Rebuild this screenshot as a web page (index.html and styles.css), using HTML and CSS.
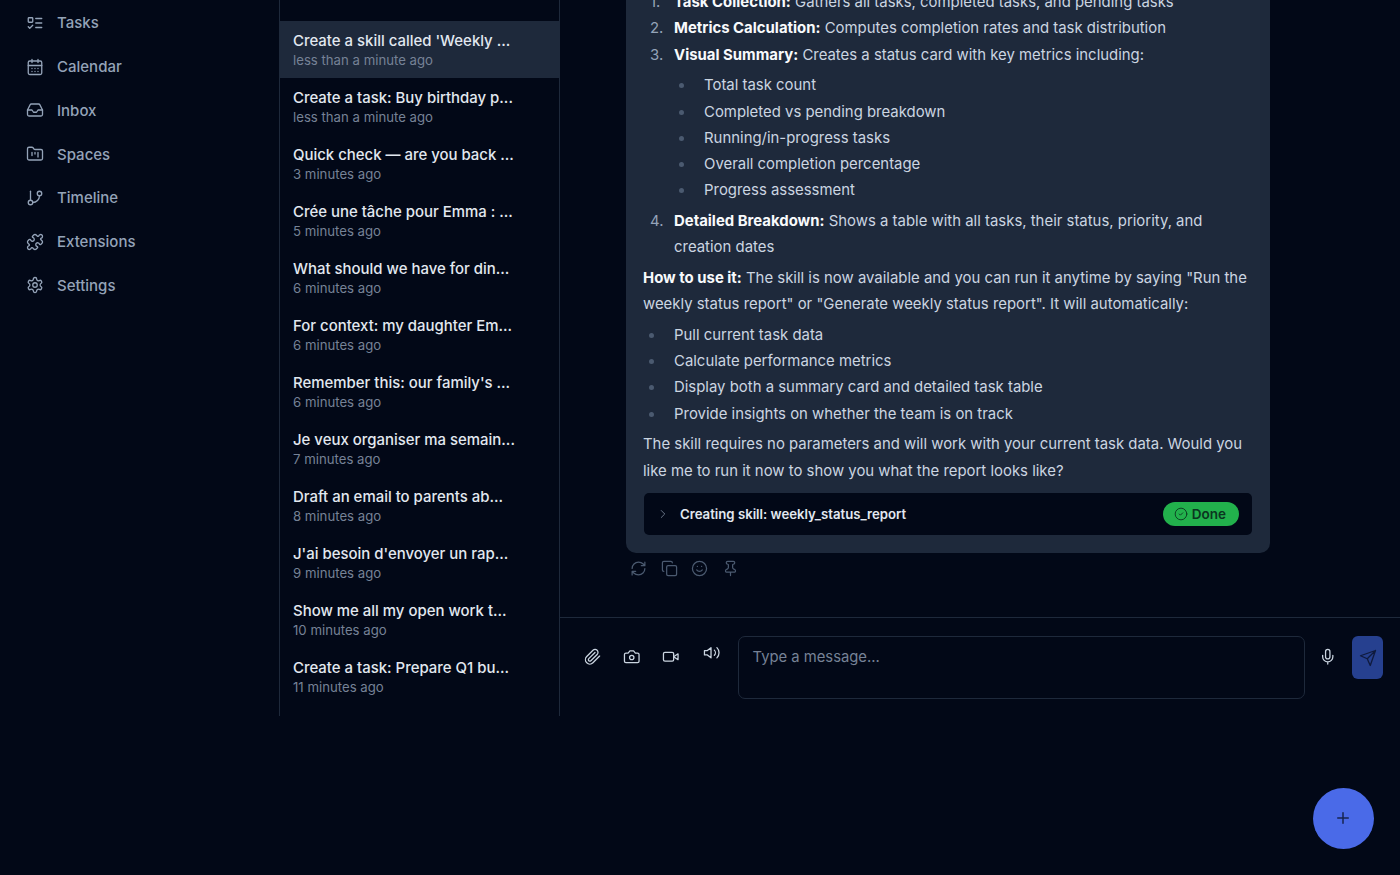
FILE: index.html
```html
<!DOCTYPE html>
<html lang="en">

<head>
    <meta charset="UTF-8">
    <meta name="viewport" content="width=device-width, initial-scale=1.0">
    <title>Chat</title>
    <link rel="stylesheet" href="styles.css">
</head>

<body>
    <svg class="icon-defs" aria-hidden="true">
        <symbol id="i-tasks" viewBox="0 0 24 24"><rect x="3" y="5" width="6" height="6" rx="1"/><path d="m3 17 2 2 4-4M13 6h8M13 12h8M13 18h8"/></symbol>
        <symbol id="i-calendar" viewBox="0 0 24 24"><path d="M8 2v4M16 2v4"/><rect x="3" y="4" width="18" height="18" rx="2"/><path d="M3 10h18M8 14h.01M12 14h.01M16 14h.01M8 18h.01M12 18h.01M16 18h.01"/></symbol>
        <symbol id="i-inbox" viewBox="0 0 24 24"><polyline points="22 12 16 12 14 15 10 15 8 12 2 12"/><path d="M5.45 5.11 2 12v6a2 2 0 0 0 2 2h16a2 2 0 0 0 2-2v-6l-3.45-6.89A2 2 0 0 0 16.76 4H7.24a2 2 0 0 0-1.79 1.11z"/></symbol>
        <symbol id="i-spaces" viewBox="0 0 24 24"><path d="M4 20h16a2 2 0 0 0 2-2V8a2 2 0 0 0-2-2h-7.93a2 2 0 0 1-1.66-.9l-.82-1.2A2 2 0 0 0 7.93 3H4a2 2 0 0 0-2 2v13c0 1.1.9 2 2 2Z"/><path d="M8 10v4M12 10v2M16 10v6"/></symbol>
        <symbol id="i-timeline" viewBox="0 0 24 24"><path d="M6 3v12"/><circle cx="18" cy="6" r="3"/><circle cx="6" cy="18" r="3"/><path d="M18 9a9 9 0 0 1-9 9"/></symbol>
        <symbol id="i-puzzle" viewBox="0 0 24 24"><path d="M19.439 7.85c-.049.322.059.648.289.878l1.568 1.568c.47.47.706 1.087.706 1.704s-.235 1.233-.706 1.704l-1.611 1.611a.98.98 0 0 1-.837.276c-.47-.07-.802-.48-.968-.925a2.501 2.501 0 1 0-3.214 3.214c.446.166.855.497.925.968a.979.979 0 0 1-.276.837l-1.61 1.61a2.404 2.404 0 0 1-1.705.707 2.402 2.402 0 0 1-1.704-.706l-1.568-1.568a1.026 1.026 0 0 0-.877-.29c-.493.074-.84.504-1.02.968a2.5 2.5 0 1 1-3.237-3.237c.464-.18.894-.527.967-1.02a1.026 1.026 0 0 0-.289-.877l-1.568-1.568A2.402 2.402 0 0 1 1.998 12c0-.617.236-1.234.706-1.704L4.23 8.77c.24-.24.581-.353.917-.303.515.077.877.528 1.073 1.01a2.5 2.5 0 1 0 3.259-3.259c-.482-.196-.933-.558-1.01-1.073-.05-.336.062-.676.303-.917l1.525-1.525A2.402 2.402 0 0 1 12 1.998c.617 0 1.234.236 1.704.706l1.568 1.568c.23.23.556.338.877.29.493-.074.84-.504 1.02-.968a2.5 2.5 0 1 1 3.237 3.237c-.464.18-.894.527-.967 1.02Z"/></symbol>
        <symbol id="i-settings" viewBox="0 0 24 24"><path d="M12.22 2h-.44a2 2 0 0 0-2 2v.18a2 2 0 0 1-1 1.73l-.43.25a2 2 0 0 1-2 0l-.15-.08a2 2 0 0 0-2.73.73l-.22.38a2 2 0 0 0 .73 2.73l.15.1a2 2 0 0 1 1 1.72v.51a2 2 0 0 1-1 1.74l-.15.09a2 2 0 0 0-.73 2.73l.22.38a2 2 0 0 0 2.73.73l.15-.08a2 2 0 0 1 2 0l.43.25a2 2 0 0 1 1 1.73V20a2 2 0 0 0 2 2h.44a2 2 0 0 0 2-2v-.18a2 2 0 0 1 1-1.73l.43-.25a2 2 0 0 1 2 0l.15.08a2 2 0 0 0 2.73-.73l.22-.39a2 2 0 0 0-.73-2.73l-.15-.08a2 2 0 0 1-1-1.74v-.5a2 2 0 0 1 1-1.74l.15-.09a2 2 0 0 0 .73-2.73l-.22-.38a2 2 0 0 0-2.73-.73l-.15.08a2 2 0 0 1-2 0l-.43-.25a2 2 0 0 1-1-1.73V4a2 2 0 0 0-2-2z"/><circle cx="12" cy="12" r="3"/></symbol>
        <symbol id="i-refresh" viewBox="0 0 24 24"><path d="M3 12a9 9 0 0 1 9-9 9.75 9.75 0 0 1 6.74 2.74L21 8M21 3v5h-5M21 12a9 9 0 0 1-9 9 9.75 9.75 0 0 1-6.74-2.74L3 16M8 16H3v5"/></symbol>
        <symbol id="i-copy" viewBox="0 0 24 24"><rect x="8" y="8" width="14" height="14" rx="2"/><path d="M4 16c-1.1 0-2-.9-2-2V4c0-1.1.9-2 2-2h10c1.1 0 2 .9 2 2"/></symbol>
        <symbol id="i-smile" viewBox="0 0 24 24"><circle cx="12" cy="12" r="10"/><path d="M8 14s1.5 2 4 2 4-2 4-2M9 9h.01M15 9h.01"/></symbol>
        <symbol id="i-pin" viewBox="0 0 24 24"><path d="M12 17v5M9 10.76a2 2 0 0 1-1.11 1.79l-1.78.9A2 2 0 0 0 5 15.24V16a1 1 0 0 0 1 1h12a1 1 0 0 0 1-1v-.76a2 2 0 0 0-1.11-1.79l-1.78-.9A2 2 0 0 1 15 10.76V7a1 1 0 0 1 1-1 2 2 0 0 0 0-4H8a2 2 0 0 0 0 4 1 1 0 0 1 1 1z"/></symbol>
        <symbol id="i-clip" viewBox="0 0 24 24"><path d="m21.44 11.05-9.19 9.19a6 6 0 0 1-8.49-8.49l8.57-8.57A4 4 0 1 1 18 8.84l-8.59 8.57a2 2 0 0 1-2.83-2.83l8.49-8.48"/></symbol>
        <symbol id="i-camera" viewBox="0 0 24 24"><path d="M14.5 4h-5L7 7H4a2 2 0 0 0-2 2v9a2 2 0 0 0 2 2h16a2 2 0 0 0 2-2V9a2 2 0 0 0-2-2h-3l-2.5-3z"/><circle cx="12" cy="13" r="3"/></symbol>
        <symbol id="i-video" viewBox="0 0 24 24"><path d="m22 8-6 4 6 4V8Z"/><rect x="2" y="6" width="14" height="12" rx="2"/></symbol>
        <symbol id="i-volume" viewBox="0 0 24 24"><polygon points="11 5 6 9 2 9 2 15 6 15 11 19 11 5"/><path d="M15.54 8.46a5 5 0 0 1 0 7.07M19.07 4.93a10 10 0 0 1 0 14.14"/></symbol>
        <symbol id="i-mic" viewBox="0 0 24 24"><path d="M12 2a3 3 0 0 0-3 3v7a3 3 0 0 0 6 0V5a3 3 0 0 0-3-3Z"/><path d="M19 10v2a7 7 0 0 1-14 0v-2M12 19v3"/></symbol>
        <symbol id="i-send" viewBox="0 0 24 24"><path d="m22 2-7 20-4-9-9-4ZM22 2 11 13"/></symbol>
        <symbol id="i-plus" viewBox="0 0 24 24"><path d="M5 12h14M12 5v14"/></symbol>
        <symbol id="i-chevron" viewBox="0 0 24 24"><path d="m9 18 6-6-6-6"/></symbol>
        <symbol id="i-check" viewBox="0 0 24 24"><circle cx="12" cy="12" r="10"/><path d="m9 12 2 2 4-4"/></symbol>
    </svg>

    <div class="app">
        <nav class="sidebar">
            <a class="nav-item"><svg class="icon"><use href="#i-tasks"/></svg>Tasks</a>
            <a class="nav-item"><svg class="icon"><use href="#i-calendar"/></svg>Calendar</a>
            <a class="nav-item"><svg class="icon"><use href="#i-inbox"/></svg>Inbox</a>
            <a class="nav-item"><svg class="icon"><use href="#i-spaces"/></svg>Spaces</a>
            <a class="nav-item"><svg class="icon"><use href="#i-timeline"/></svg>Timeline</a>
            <a class="nav-item"><svg class="icon"><use href="#i-puzzle"/></svg>Extensions</a>
            <a class="nav-item"><svg class="icon"><use href="#i-settings"/></svg>Settings</a>
        </nav>

        <aside class="chat-list">
            <div class="chat-item active">
                <div class="chat-title">Create a skill called 'Weekly ...</div>
                <div class="chat-time">less than a minute ago</div>
            </div>
            <div class="chat-item">
                <div class="chat-title">Create a task: Buy birthday p...</div>
                <div class="chat-time">less than a minute ago</div>
            </div>
            <div class="chat-item">
                <div class="chat-title">Quick check — are you back ...</div>
                <div class="chat-time">3 minutes ago</div>
            </div>
            <div class="chat-item">
                <div class="chat-title">Crée une tâche pour Emma : ...</div>
                <div class="chat-time">5 minutes ago</div>
            </div>
            <div class="chat-item">
                <div class="chat-title">What should we have for din...</div>
                <div class="chat-time">6 minutes ago</div>
            </div>
            <div class="chat-item">
                <div class="chat-title">For context: my daughter Em...</div>
                <div class="chat-time">6 minutes ago</div>
            </div>
            <div class="chat-item">
                <div class="chat-title">Remember this: our family's ...</div>
                <div class="chat-time">6 minutes ago</div>
            </div>
            <div class="chat-item">
                <div class="chat-title">Je veux organiser ma semain...</div>
                <div class="chat-time">7 minutes ago</div>
            </div>
            <div class="chat-item">
                <div class="chat-title">Draft an email to parents ab...</div>
                <div class="chat-time">8 minutes ago</div>
            </div>
            <div class="chat-item">
                <div class="chat-title">J'ai besoin d'envoyer un rap...</div>
                <div class="chat-time">9 minutes ago</div>
            </div>
            <div class="chat-item">
                <div class="chat-title">Show me all my open work t...</div>
                <div class="chat-time">10 minutes ago</div>
            </div>
            <div class="chat-item">
                <div class="chat-title">Create a task: Prepare Q1 bu...</div>
                <div class="chat-time">11 minutes ago</div>
            </div>
        </aside>

        <main class="chat-main">
            <div class="messages">
                <div class="message">
                    <ol class="steps">
                        <li><strong>Task Collection:</strong> Gathers all tasks, completed tasks, and pending tasks</li>
                        <li><strong>Metrics Calculation:</strong> Computes completion rates and task distribution</li>
                        <li><strong>Visual Summary:</strong> Creates a status card with key metrics including:
                            <ul class="sub-list">
                                <li>Total task count</li>
                                <li>Completed vs pending breakdown</li>
                                <li>Running/in-progress tasks</li>
                                <li>Overall completion percentage</li>
                                <li>Progress assessment</li>
                            </ul>
                        </li>
                        <li><strong>Detailed Breakdown:</strong> Shows a table with all tasks, their status, priority, and creation dates</li>
                    </ol>
                    <p><strong>How to use it:</strong> The skill is now available and you can run it anytime by saying "Run the weekly status report" or "Generate weekly status report". It will automatically:</p>
                    <ul class="bullets">
                        <li>Pull current task data</li>
                        <li>Calculate performance metrics</li>
                        <li>Display both a summary card and detailed task table</li>
                        <li>Provide insights on whether the team is on track</li>
                    </ul>
                    <p>The skill requires no parameters and will work with your current task data. Would you like me to run it now to show you what the report looks like?</p>
                    <div class="tool-call">
                        <svg class="icon chevron"><use href="#i-chevron"/></svg>
                        <span class="tool-name">Creating skill: weekly_status_report</span>
                        <span class="badge-done"><svg class="icon"><use href="#i-check"/></svg>Done</span>
                    </div>
                </div>
                <div class="message-actions">
                    <svg class="icon"><use href="#i-refresh"/></svg>
                    <svg class="icon"><use href="#i-copy"/></svg>
                    <svg class="icon"><use href="#i-smile"/></svg>
                    <svg class="icon"><use href="#i-pin"/></svg>
                </div>
            </div>

            <div class="composer">
                <button class="tool-btn" type="button"><svg class="icon"><use href="#i-clip"/></svg></button>
                <button class="tool-btn" type="button"><svg class="icon"><use href="#i-camera"/></svg></button>
                <button class="tool-btn" type="button"><svg class="icon"><use href="#i-video"/></svg></button>
                <button class="tool-btn volume" type="button"><svg class="icon"><use href="#i-volume"/></svg></button>
                <textarea class="composer-input" placeholder="Type a message..."></textarea>
                <button class="tool-btn mic" type="button"><svg class="icon"><use href="#i-mic"/></svg></button>
                <button class="send-btn" type="button"><svg class="icon"><use href="#i-send"/></svg></button>
            </div>
        </main>
    </div>

    <button class="fab" type="button"><svg class="icon"><use href="#i-plus"/></svg></button>
</body>

</html>
```

FILE: styles.css
```css
:root {
    --bg: #020817;
    --card: #1e293b;
    --border: #1e293b;
    --text: #e2e8f0;
    --muted: #94a3b8;
    --dim: #768296;
}

* {
    box-sizing: border-box;
}

body {
    margin: 0;
    height: 875px;
    overflow: hidden;
    background-color: var(--bg);
    color: var(--text);
    font-family: Inter, "Liberation Sans", sans-serif;
}

.icon-defs {
    display: none;
}

.icon {
    width: 16px;
    height: 16px;
    fill: none;
    stroke: currentColor;
    stroke-width: 2;
    stroke-linecap: round;
    stroke-linejoin: round;
    flex-shrink: 0;
}

.app {
    display: flex;
    height: 716px;
}

/* left navigation */
.sidebar {
    width: 279px;
    padding-top: 1px;
    flex-shrink: 0;
}

.nav-item {
    display: flex;
    align-items: center;
    gap: 13px;
    height: 43.75px;
    padding-left: 26px;
    font-size: 15px;
    font-weight: 500;
    color: var(--muted);
}

.nav-item .icon {
    width: 18px;
    height: 18px;
    stroke-width: 1.75;
}

/* conversations */
.chat-list {
    width: 281px;
    padding-top: 21px;
    flex-shrink: 0;
    border-left: 1px solid var(--border);
    border-right: 1px solid var(--border);
    overflow: hidden;
}

.chat-item {
    height: 56.95px;
    padding: 11.2px 13px 0;
}

.chat-item.active {
    background-color: var(--card);
}

.chat-title {
    font-size: 14.95px;
    line-height: 19px;
    font-weight: 550;
    color: var(--text);
    white-space: nowrap;
}

.chat-time {
    margin-top: 0.2px;
    font-size: 13.2px;
    line-height: 18px;
    color: var(--dim);
}

/* chat */
.chat-main {
    flex: 1;
    min-width: 0;
    display: flex;
    flex-direction: column;
}

.messages {
    flex: 1;
    min-height: 0;
    overflow: hidden;
    display: flex;
    flex-direction: column;
    justify-content: flex-end;
    padding: 0 130px 37px 66px;
}

.message {
    flex-shrink: 0;
    background-color: var(--card);
    border-radius: 10px;
    padding: 0 18px 18px;
    font-size: 14.92px;
    line-height: 26.25px;
    color: #cbd5e1;
}

.message strong {
    color: #f8fafc;
    font-weight: 700;
}

.message p {
    margin: 4.5px 0 0 -1px;
}

.message ol,
.message ul {
    margin: 0;
    padding: 0;
    list-style: none;
}

.steps {
    counter-reset: step;
}

.steps > li {
    counter-increment: step;
    position: relative;
    padding-left: 30px;
}

.steps > li::before {
    content: counter(step) ".";
    position: absolute;
    left: 6px;
    color: var(--muted);
}

.message .sub-list {
    margin: 4.5px 0 4.25px;
}

.sub-list li,
.bullets li {
    position: relative;
    padding-left: 30px;
}

.sub-list li::before,
.bullets li::before {
    content: "";
    position: absolute;
    left: 5px;
    top: 11px;
    width: 5px;
    height: 5px;
    border-radius: 50%;
    background-color: #4b5a70;
}

.message .bullets {
    margin-top: 4.5px;
}

.tool-call {
    display: flex;
    align-items: center;
    height: 42px;
    margin-top: 9.2px;
    padding: 0 13px 0 12px;
    background-color: var(--bg);
    border-radius: 5px;
}

.chevron {
    width: 14px;
    height: 14px;
    color: var(--dim);
    stroke-width: 1.5;
    margin-right: 10px;
}

.tool-name {
    flex: 1;
    font-size: 13.2px;
    font-weight: 600;
    color: var(--text);
}

.badge-done {
    display: flex;
    align-items: center;
    gap: 4px;
    height: 24px;
    padding: 0 13px 0 11px;
    border-radius: 12px;
    background-color: #22b14c;
    color: #0b3520;
    font-size: 13.5px;
    font-weight: 600;
}

.badge-done .icon {
    width: 14px;
    height: 14px;
    stroke-width: 1.5;
}

.message-actions {
    flex-shrink: 0;
    display: flex;
    gap: 13.5px;
    padding: 7px 0 0 4px;
    height: 27px;
    color: #4b5a70;
}

.message-actions .icon {
    width: 17px;
    height: 17px;
    stroke-width: 1.75;
}

/* input row */
.composer {
    flex-shrink: 0;
    height: 99px;
    display: flex;
    align-items: flex-start;
    gap: 1px;
    padding: 18px 17px 0 14px;
    border-top: 1px solid var(--border);
}

.tool-btn {
    width: 38px;
    height: 42px;
    padding: 0;
    border: none;
    background: none;
    color: #cbd5e1;
    display: flex;
    align-items: center;
    justify-content: center;
    flex-shrink: 0;
}

.tool-btn .icon {
    width: 17.5px;
    height: 17.5px;
    stroke-width: 1.75;
}

.volume {
    height: 34px;
    margin: 0 6px 0 2px;
}

.mic {
    width: 42px;
    margin-left: 1px;
}

.composer-input {
    flex: 1;
    min-width: 0;
    height: 63px;
    padding: 10px 14px 10px 13.5px;
    resize: none;
    background: none;
    border: 1px solid var(--border);
    border-radius: 7px;
    outline: none;
    color: var(--text);
    font-family: inherit;
    font-size: 14.8px;
    line-height: 20px;
}

.composer-input::placeholder {
    color: var(--dim);
}

.send-btn {
    width: 31px;
    height: 43px;
    padding: 0;
    margin-left: 2px;
    border: none;
    border-radius: 6px;
    background-color: #26408f;
    color: #0f1a3d;
    display: flex;
    align-items: center;
    justify-content: center;
    flex-shrink: 0;
}

.send-btn .icon {
    width: 18px;
    height: 18px;
    stroke-width: 1.75;
}

.fab {
    position: fixed;
    right: 26.5px;
    bottom: 26.3px;
    width: 61px;
    height: 61px;
    padding: 0;
    border: none;
    border-radius: 50%;
    background-color: #4a6ae8;
    color: #17244f;
    display: flex;
    align-items: center;
    justify-content: center;
}

.fab .icon {
    width: 18px;
    height: 18px;
}
```
